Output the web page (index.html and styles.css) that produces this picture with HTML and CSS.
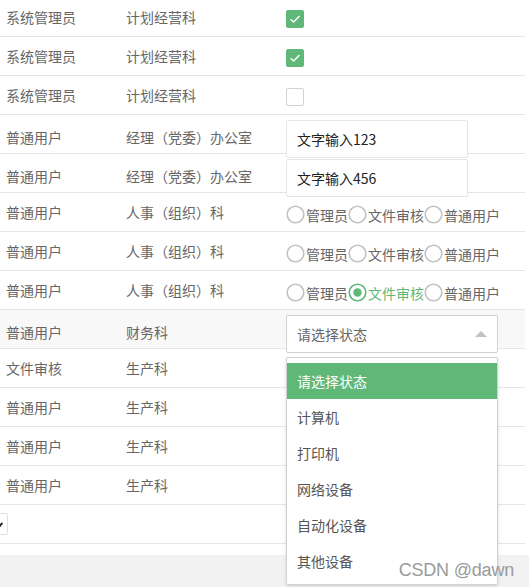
FILE: index.html
```html
<!DOCTYPE html>
<html lang="zh-CN">
<head>
<meta charset="utf-8">
<title>表格</title>
<link rel="stylesheet" href="styles.css">
</head>
<body>
<div class="page">
  <div class="table">
    <div class="row">
      <div class="cell c1">系统管理员</div>
      <div class="cell c2">计划经营科</div>
      <div class="cell c3"><span class="checkbox checked"><svg width="16" height="16" viewBox="0 0 16 16"><path d="M3.5 8.2 L6.6 11 L12.5 5" fill="none" stroke="#fff" stroke-width="1.4"/></svg></span></div>
    </div>
    <div class="row">
      <div class="cell c1">系统管理员</div>
      <div class="cell c2">计划经营科</div>
      <div class="cell c3"><span class="checkbox checked"><svg width="16" height="16" viewBox="0 0 16 16"><path d="M3.5 8.2 L6.6 11 L12.5 5" fill="none" stroke="#fff" stroke-width="1.4"/></svg></span></div>
    </div>
    <div class="row">
      <div class="cell c1">系统管理员</div>
      <div class="cell c2">计划经营科</div>
      <div class="cell c3"><span class="checkbox"></span></div>
    </div>
    <div class="row">
      <div class="cell c1">普通用户</div>
      <div class="cell c2">经理（党委）办公室</div>
      <div class="cell c3 top"><div class="input">文字输入123</div></div>
    </div>
    <div class="row">
      <div class="cell c1">普通用户</div>
      <div class="cell c2">经理（党委）办公室</div>
      <div class="cell c3 top"><div class="input">文字输入456</div></div>
    </div>
    <div class="row">
      <div class="cell c1">普通用户</div>
      <div class="cell c2">人事（组织）科</div>
      <div class="cell c3 radios">
        <span class="radio"><svg width="20" height="20" viewBox="0 0 20 20"><circle cx="9.5" cy="9.5" r="8.3" fill="#fff" stroke="#c2c2c2" stroke-width="1.6"/></svg>管理员</span>
        <span class="radio"><svg width="20" height="20" viewBox="0 0 20 20"><circle cx="9.5" cy="9.5" r="8.3" fill="#fff" stroke="#c2c2c2" stroke-width="1.6"/></svg>文件审核</span>
        <span class="radio"><svg width="20" height="20" viewBox="0 0 20 20"><circle cx="9.5" cy="9.5" r="8.3" fill="#fff" stroke="#c2c2c2" stroke-width="1.6"/></svg>普通用户</span>
      </div>
    </div>
    <div class="row">
      <div class="cell c1">普通用户</div>
      <div class="cell c2">人事（组织）科</div>
      <div class="cell c3 radios">
        <span class="radio"><svg width="20" height="20" viewBox="0 0 20 20"><circle cx="9.5" cy="9.5" r="8.3" fill="#fff" stroke="#c2c2c2" stroke-width="1.6"/></svg>管理员</span>
        <span class="radio"><svg width="20" height="20" viewBox="0 0 20 20"><circle cx="9.5" cy="9.5" r="8.3" fill="#fff" stroke="#c2c2c2" stroke-width="1.6"/></svg>文件审核</span>
        <span class="radio"><svg width="20" height="20" viewBox="0 0 20 20"><circle cx="9.5" cy="9.5" r="8.3" fill="#fff" stroke="#c2c2c2" stroke-width="1.6"/></svg>普通用户</span>
      </div>
    </div>
    <div class="row">
      <div class="cell c1">普通用户</div>
      <div class="cell c2">人事（组织）科</div>
      <div class="cell c3 radios">
        <span class="radio"><svg width="20" height="20" viewBox="0 0 20 20"><circle cx="9.5" cy="9.5" r="8.3" fill="#fff" stroke="#c2c2c2" stroke-width="1.6"/></svg>管理员</span>
        <span class="radio on"><svg width="20" height="20" viewBox="0 0 20 20"><circle cx="9.5" cy="9.5" r="8.3" fill="#fff" stroke="#5fb878" stroke-width="1.6"/><circle cx="9.5" cy="9.5" r="4.2" fill="#5fb878"/></svg>文件审核</span>
        <span class="radio"><svg width="20" height="20" viewBox="0 0 20 20"><circle cx="9.5" cy="9.5" r="8.3" fill="#fff" stroke="#c2c2c2" stroke-width="1.6"/></svg>普通用户</span>
      </div>
    </div>
    <div class="row hover">
      <div class="cell c1">普通用户</div>
      <div class="cell c2">财务科</div>
      <div class="cell c3 top">
        <div class="select">
          <span class="select-value">请选择状态</span>
          <span class="caret"></span>
          <div class="options">
            <div class="opt sel">请选择状态</div>
            <div class="opt">计算机</div>
            <div class="opt">打印机</div>
            <div class="opt">网络设备</div>
            <div class="opt">自动化设备</div>
            <div class="opt">其他设备</div>
          </div>
        </div>
      </div>
    </div>
    <div class="row">
      <div class="cell c1">文件审核</div>
      <div class="cell c2">生产科</div>
      <div class="cell c3"></div>
    </div>
    <div class="row">
      <div class="cell c1">普通用户</div>
      <div class="cell c2">生产科</div>
      <div class="cell c3"></div>
    </div>
    <div class="row">
      <div class="cell c1">普通用户</div>
      <div class="cell c2">生产科</div>
      <div class="cell c3"></div>
    </div>
    <div class="row">
      <div class="cell c1">普通用户</div>
      <div class="cell c2">生产科</div>
      <div class="cell c3"></div>
    </div>
    <div class="row last">
      <div class="pagebox"><svg width="30" height="22" viewBox="0 0 30 22"><path d="M22 12.5 L24.5 10" stroke="#222" stroke-width="1.8" fill="none"/><path d="M21.6 13.2 L22.6 12.2" stroke="#222" stroke-width="2" fill="none"/></svg></div>
    </div>
  </div>
  <div class="footer"></div>
  <div class="watermark">CSDN @dawn</div>
</div>
</body>
</html>
```

FILE: styles.css
```css
html, body {
  margin: 0;
  padding: 0;
  background: #fff;
  overflow: hidden;
}
.page {
  position: relative;
  width: 529px;
  height: 587px;
  overflow: hidden;
  font-family: "Noto Sans CJK SC", "Microsoft YaHei", sans-serif;
  font-size: 14px;
  color: #666;
}
.table {
  margin: -3px 0 0 -9px;
  width: 534px;
  padding-bottom: 11px;
}
.row {
  display: grid;
  grid-template-columns: 120px 160px 1fr;
  height: 38px;
  border-top: 1px solid #e6e6e6;
}
.row.last {
  display: flex;
  border-bottom: 1px solid #e6e6e6;
}
.row.hover {
  background: #f8f8f8;
}
.cell {
  padding: 0 15px;
  line-height: 38px;
  white-space: nowrap;
  display: flex;
  align-items: center;
}
.cell.top {
  align-items: flex-start;
  padding-top: 5px;
}
.checkbox {
  box-sizing: border-box;
  width: 18px;
  height: 18px;
  border: 1px solid #d2d2d2;
  border-radius: 2px;
  background: #fff;
  display: flex;
  align-items: center;
  justify-content: center;
  margin-top: 4px;
}
.checkbox.checked {
  background: #5fb878;
  border-color: #5fb878;
}
.checkbox svg {
  display: block;
}
.input {
  position: relative;
  z-index: 1;
  box-sizing: border-box;
  width: 182px;
  height: 38px;
  border: 1px solid #e6e6e6;
  border-radius: 2px;
  background: #fff;
  padding-left: 10px;
  line-height: 36px;
  color: #222;
}
.radios {
  padding-top: 6px;
}
.radio {
  display: inline-flex;
  align-items: center;
  line-height: 20px;
}
.radio svg {
  display: block;
  flex: none;
}
.radio.on {
  color: #5fb878;
}
.select {
  position: relative;
  z-index: 2;
  box-sizing: border-box;
  width: 212px;
  height: 38px;
  border: 1px solid #d2d2d2;
  border-radius: 2px;
  background: #fff;
  padding-left: 10px;
  line-height: 36px;
  color: #666;
}
.caret {
  position: absolute;
  right: 10px;
  top: 15px;
  width: 0;
  height: 0;
  border-left: 6px solid transparent;
  border-right: 6px solid transparent;
  border-bottom: 6px solid #c2c2c2;
}
.options {
  position: absolute;
  left: -1px;
  top: 41px;
  box-sizing: border-box;
  width: 212px;
  padding: 5px 0;
  border: 1px solid #d2d2d2;
  border-radius: 2px;
  background: #fff;
  box-shadow: 0 2px 4px rgba(0, 0, 0, 0.12);
}
.opt {
  height: 36px;
  line-height: 36px;
  padding: 0 10px;
  color: #555;
}
.opt.sel {
  background: #5fb878;
  color: #fff;
}
.pagebox {
  box-sizing: border-box;
  width: 30px;
  height: 22px;
  margin: 8px 0 0 -13px;
  border: 1px solid #e2e2e2;
  border-radius: 2px;
  background: #fff;
}
.pagebox svg {
  display: block;
  margin: -1px 0 0 -1px;
}
.footer {
  height: 40px;
  background: #f2f2f2;
}
.watermark {
  position: absolute;
  right: 15px;
  bottom: 6px;
  z-index: 5;
  font-family: "Liberation Sans", Arial, sans-serif;
  font-size: 18px;
  line-height: 22px;
  color: #9a9a9a;
  letter-spacing: -0.2px;
}
```
